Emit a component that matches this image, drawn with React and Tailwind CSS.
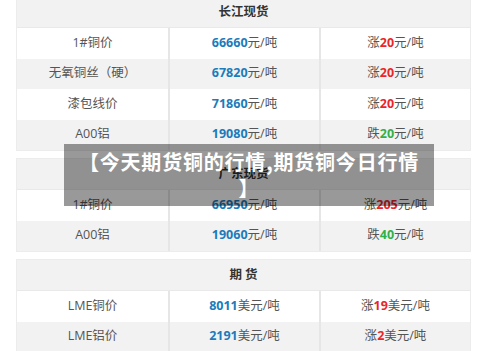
import React from "react";

const FONT = { fontFamily: '"Open Sans", "Noto Sans CJK SC", sans-serif' };

function Price({ num, unit = "元/吨" }) {
  return (
    <span>
      <span className="font-bold text-[#1b7bbb]">{num}</span>
      <span className="text-[#555]">{unit}</span>
    </span>
  );
}

function Change({ dir, num, unit = "元/吨" }) {
  const up = dir === "涨";
  return (
    <span className="text-[#555]">
      {dir}
      <span className={up ? "font-bold text-[#e8262a]" : "font-bold text-[#33b047]"}>{num}</span>
      {unit}
    </span>
  );
}

function Table({ title, rows, first }) {
  return (
    <div className={"border border-[#ececec] " + (first ? "-mt-[4px]" : "mt-[7px]")}>
      <div className="h-[31px] bg-[#f2f2f2] flex items-center justify-center text-[12.5px] font-bold text-[#333] border-b border-[#e9e9e9]">
        {title}
      </div>
      {rows.map((r, i) => (
        <div
          key={i}
          className={"grid grid-cols-3 h-[30.5px] text-[12.5px] " + (i % 2 === 1 ? "bg-[#f2f2f2]" : "bg-white")}
        >
          <div className="flex items-center justify-center text-[#555]">{r[0]}</div>
          <div className="flex items-center justify-center border-l-2 border-[#e6e6e6]">{r[1]}</div>
          <div className="flex items-center justify-center border-l-2 border-[#e6e6e6]">{r[2]}</div>
        </div>
      ))}
    </div>
  );
}

export default function App() {
  return (
    <div className="relative w-[500px] h-[351px] overflow-hidden bg-white" style={FONT}>
      <div className="ml-[16px] w-[455px]">
        <Table
          first
          title="长江现货"
          rows={[
            ["1#铜价", <Price num="66660" />, <Change dir="涨" num="20" />],
            ["无氧铜丝（硬）", <Price num="67820" />, <Change dir="涨" num="20" />],
            ["漆包线价", <Price num="71860" />, <Change dir="涨" num="20" />],
            ["A00铝", <Price num="19080" />, <Change dir="跌" num="20" />],
          ]}
        />
        <Table
          title="广东现货"
          rows={[
            ["1#铜价", <Price num="66950" />, <Change dir="涨" num="205" />],
            ["A00铝", <Price num="19060" />, <Change dir="跌" num="40" />],
          ]}
        />
        <Table
          title="期 货"
          rows={[
            ["LME铜价", <Price num="8011" unit="美元/吨" />, <Change dir="涨" num="19" unit="美元/吨" />],
            ["LME铝价", <Price num="2191" unit="美元/吨" />, <Change dir="涨" num="2" unit="美元/吨" />],
            ["", "", ""],
          ]}
        />
      </div>
      <div className="absolute left-[64px] top-[144px] w-[370px] h-[62px] bg-black/40 flex items-center justify-center">
        <div
          className="text-white font-bold text-[20px] leading-[26px] tracking-[0.8px] text-center whitespace-nowrap"
          style={{ fontFamily: '"Noto Sans CJK SC", sans-serif' }}
        >
          【今天期货铜的行情,期货铜今日行情
          <br />】
        </div>
      </div>
    </div>
  );
}
